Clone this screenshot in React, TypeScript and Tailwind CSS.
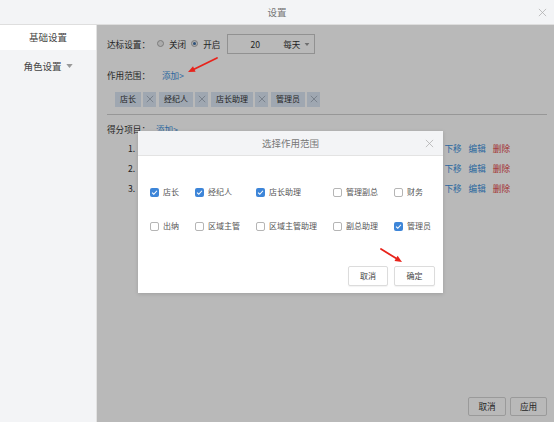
const font = { fontFamily: '"Noto Sans CJK SC", "Liberation Sans", sans-serif' }

function Check({ on }: { on?: boolean }) {
  if (on)
    return (
      <span className="flex h-[9px] w-[9px] shrink-0 items-center justify-center rounded-[2px] bg-[#3d85d8]">
        <svg viewBox="0 0 10 10" className="h-[7px] w-[7px]">
          <path d="M1.5 5.2 L4 7.5 L8.5 2.5" fill="none" stroke="#fff" strokeWidth="1.6" />
        </svg>
      </span>
    )
  return <span className="h-[9px] w-[9px] shrink-0 rounded-[2px] border border-[#b5b5b5] bg-white" />
}

function Opt({ label, on }: { label: string; on?: boolean }) {
  return (
    <div className="flex h-[12px] items-center gap-[4px] text-[8px] leading-none text-[#555]">
      <Check on={on} />
      <span className="whitespace-nowrap">{label}</span>
    </div>
  )
}

function Tag({ label }: { label: string }) {
  return (
    <div className="flex h-[15px] gap-[2px]">
      <span className="flex items-center bg-[#dbe6f4] px-[5px] text-[8px] text-[#333]">{label}</span>
      <span className="flex w-[13px] items-center justify-center bg-[#dbe6f4]">
        <svg viewBox="0 0 10 10" className="h-[8px] w-[8px]">
          <path d="M1 1 L9 9 M9 1 L1 9" stroke="#8a96a6" strokeWidth="0.8" />
        </svg>
      </span>
    </div>
  )
}

function Radio({ on }: { on?: boolean }) {
  return (
    <span className="flex h-[7px] w-[7px] items-center justify-center rounded-full border border-[#aaa] bg-[#eee]">
      {on && <span className="h-[3px] w-[3px] rounded-full bg-[#3d6fa8]" />}
    </span>
  )
}

function ScoreRow({ n }: { n: number }) {
  return (
    <div className="flex h-[20px] items-center text-[8.6px]">
      <span className="ml-[21px] text-[#333]">{n}.</span>
      <div className="ml-auto mr-[37px] flex gap-[7px]">
        <span className="text-[#3b8fdc]">下移</span>
        <span className="text-[#3b8fdc]">编辑</span>
        <span className="text-[#e23a3a]">删除</span>
      </div>
    </div>
  )
}

export default function App() {
  return (
    <div className="relative h-[422px] w-[554px] overflow-hidden bg-white" style={font}>
      {/* title bar */}
      <div className="relative flex h-[25px] items-center justify-center border-b border-[#dedede] bg-[#f3f4f6]">
        <span className="text-[9.5px] text-[#777]">设置</span>
        <svg viewBox="0 0 10 10" className="absolute right-[7px] top-[8px] h-[9px] w-[9px]">
          <path d="M1 1 L9 9 M9 1 L1 9" stroke="#aaa" strokeWidth="0.8" />
        </svg>
      </div>

      <div className="flex h-[397px]">
        {/* sidebar */}
        <div className="w-[97px] shrink-0 border-r border-[#e2e2e2] bg-[#f3f4f6]">
          <div className="flex h-[25px] items-center justify-center bg-white text-[9.5px] text-[#444]">基础设置</div>
          <div className="mt-[9px] flex items-center justify-center gap-[4px] text-[9.5px] text-[#444]">
            角色设置
            <svg viewBox="0 0 8 5" className="h-[4px] w-[7px]">
              <path d="M0 0 H8 L4 5 Z" fill="#999" />
            </svg>
          </div>
        </div>

        {/* content */}
        <div className="relative flex flex-1 flex-col bg-white pl-[10px] pr-[7px] pt-[9px]">
          <div className="flex h-[20px] items-center text-[8.6px] text-[#333]">
            <span>达标设置：</span>
            <span className="ml-[7px] flex items-center gap-[5px]">
              <Radio />
              <span>关闭</span>
            </span>
            <span className="ml-[5px] flex items-center gap-[5px]">
              <Radio on />
              <span>开启</span>
            </span>
            <div className="ml-[7px] flex h-[20px] w-[88px] items-center border border-[#c8c8c8] pr-[4px]">
              <span className="ml-[22px]">20</span>
              <span className="ml-auto">每天</span>
              <svg viewBox="0 0 8 5" className="ml-[4px] h-[3px] w-[6px]">
                <path d="M0 0 H8 L4 5 Z" fill="#999" />
              </svg>
            </div>
          </div>

          <div className="mt-[15px] flex items-center text-[8.6px]">
            <span className="text-[#333]">作用范围：</span>
            <span className="ml-[12px] text-[#3b8fdc]">添加&gt;</span>
          </div>

          <div className="ml-[8px] mt-[10px] flex gap-[3px]">
            <Tag label="店长" />
            <Tag label="经纪人" />
            <Tag label="店长助理" />
            <Tag label="管理员" />
          </div>

          <div className="mt-[7px] h-px bg-[#d0d0d0]" />

          <div className="mt-[8px] flex items-center text-[8.6px]">
            <span className="text-[#333]">得分项目：</span>
            <span className="ml-[6px] text-[#3b8fdc]">添加&gt;</span>
          </div>

          <div className="mt-[3px] flex flex-col">
            <ScoreRow n={1} />
            <ScoreRow n={2} />
            <ScoreRow n={3} />
          </div>

          <div className="mb-[6px] mt-auto flex justify-end gap-[4px]">
            <button className="h-[19px] w-[38px] rounded-[2px] border border-[#d5d5d5] bg-white text-[8.6px] text-[#333]">取消</button>
            <button className="h-[19px] w-[37px] rounded-[2px] border border-[#d5d5d5] bg-white text-[8.6px] text-[#333]">应用</button>
          </div>

          {/* mask */}
          <div className="absolute inset-0 bg-black/[0.275]" />

          {/* dialog */}
          <div className="absolute left-[41px] top-[106px] flex h-[162px] w-[305px] flex-col bg-white shadow-[0_1px_4px_rgba(0,0,0,0.15)]">
            <div className="relative flex h-[25px] items-center justify-center border-b border-[#e3e3e3] bg-[#f3f4f6]">
              <span className="text-[9.5px] text-[#777]">选择作用范围</span>
              <svg viewBox="0 0 10 10" className="absolute right-[9px] top-[8px] h-[9px] w-[9px]">
                <path d="M1 1 L9 9 M9 1 L1 9" stroke="#aaa" strokeWidth="0.8" />
              </svg>
            </div>
            <div className="grid grid-cols-[repeat(5,auto)] justify-start gap-x-[16px] gap-y-[22px] pl-[12px] pt-[30px]">
              <Opt label="店长" on />
              <Opt label="经纪人" on />
              <Opt label="店长助理" on />
              <Opt label="管理副总" />
              <Opt label="财务" />
              <Opt label="出纳" />
              <Opt label="区域主管" />
              <Opt label="区域主管助理" />
              <Opt label="副总助理" />
              <Opt label="管理员" on />
            </div>
            <div className="mb-[7px] mt-auto flex justify-end gap-[6px] pr-[8px]">
              <button className="h-[20px] w-[40px] rounded-[2px] border border-[#dcdcdc] bg-white text-[8px] text-[#444] shadow-[0_1px_1px_rgba(0,0,0,0.05)]">取消</button>
              <button className="h-[20px] w-[41px] rounded-[2px] border border-[#dcdcdc] bg-white text-[8px] text-[#444] shadow-[0_1px_1px_rgba(0,0,0,0.05)]">确定</button>
            </div>
          </div>
        </div>
      </div>

      {/* red annotation arrows */}
      <svg viewBox="0 0 554 422" className="pointer-events-none absolute inset-0 h-[422px] w-[554px]">
        <line x1="217" y1="58" x2="194.5" y2="69" stroke="#e8231b" strokeWidth="1.8" strokeLinecap="round" />
        <polygon points="188,72 195.6,71.7 193,66.2" fill="#e8231b" />
        <line x1="381" y1="249" x2="396" y2="258.3" stroke="#e8231b" strokeWidth="1.8" strokeLinecap="round" />
        <polygon points="402,262 394.5,260.9 397.6,255.7" fill="#e8231b" />
      </svg>
    </div>
  )
}
